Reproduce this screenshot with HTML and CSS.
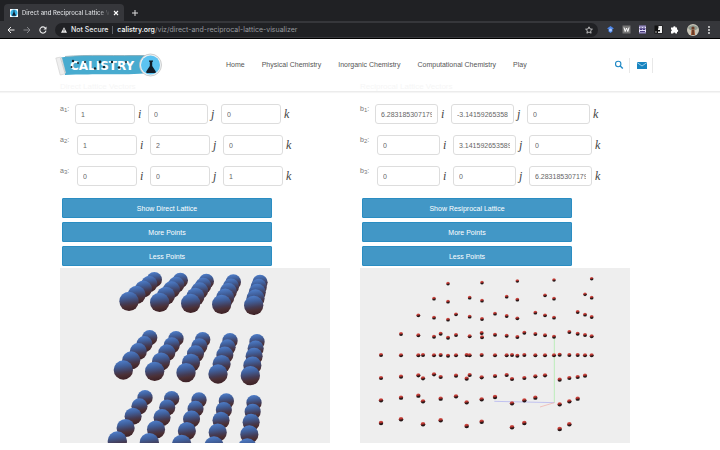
FILE: index.html
```html
<!DOCTYPE html>
<html lang="en">
<head>
<meta charset="utf-8">
<title>Direct and Reciprocal Lattice Visualizer</title>
<link rel="stylesheet" href="styles.css">
</head>
<body>
<div class="browser">
  <div class="tabs">
    <div class="tab">
      <svg class="favicon" viewBox="0 0 9 9"><path fill="#fff" d="M0 0h9v9H0z"/><circle cx="4.5" cy="4.5" r="4" fill="#38b4e6"/><path fill="#123" d="M4 1.5h1v2L6.800 7.500H2.200L4 3.500z"/></svg>
      <span class="tab-title">Direct and Reciprocal Lattice V</span>
      <button class="plain" aria-label="Close tab"><svg width="6" height="6" viewBox="0 0 6 6"><path d="M1 1l4 4M5 1L1 5" stroke="#fff" stroke-width="1.100"/></svg></button>
    </div>
    <button class="plain" aria-label="New tab"><svg width="8" height="8" viewBox="0 0 8 8"><path d="M4 1v6M1 4h6" stroke="#ddd" stroke-width="1"/></svg></button>
  </div>
  <div class="toolbar">
    <button class="plain" aria-label="Back"><svg width="8" height="8" viewBox="0 0 8 8"><path d="M7.500 4H1M4 1L1 4l3 3" fill="none" stroke="#eee"/></svg></button>
    <button class="plain" aria-label="Forward"><svg width="8" height="8" viewBox="0 0 8 8"><path d="M.5 4H7M4 1l3 3-3 3" fill="none" stroke="#85868a"/></svg></button>
    <button class="plain" aria-label="Reload"><svg width="8" height="8" viewBox="0 0 8 8"><path d="M6.500 2.200A3.100 3.100 0 1 0 7 4.700" fill="none" stroke="#eee" stroke-width="1.100"/><path d="M7.500.5v3h-3z" fill="#eee"/></svg></button>
    <div class="address">
      <svg width="6" height="6" viewBox="0 0 6 6"><path d="M3 .2L6 5.800H0z" fill="#eee"/><path d="M3 2v2M3 4.500v.7" stroke="#202124" stroke-width=".7"/></svg>
      <span class="insecure">Not Secure</span>
      <span class="url"><b>calistry.org</b>/viz/direct-and-reciprocal-lattice-visualizer</span>
      <button class="plain star" aria-label="Bookmark"><svg width="8" height="8" viewBox="0 0 8 8"><path d="M4 .8l1 2.200 2.400.2-1.800 1.600.5 2.400L4 6 1.900 7.200l.5-2.400L.6 3.200 3 3z" fill="none" stroke="#ddd" stroke-width=".8"/></svg></button>
    </div>
    <div class="extensions">
      <svg viewBox="0 0 9 9"><path d="M4.500 1L8 3.500 6.500 4v2.500l-2 1.500-2-1.500V4L1 3.500z" fill="#4d86e8"/><circle cx="4.500" cy="5" r="1.500" fill="#a8c7ff"/></svg>
      <svg viewBox="0 0 9 9"><path d="M.5.5h8v8h-8z" fill="#777"/><path d="M2 2.500l1.200 4L4.500 3l1.300 3.500L7 2.500" fill="none" stroke="#fff"/></svg>
      <svg viewBox="0 0 9 9"><path d="M1 .5h7v8H1z" fill="#e8e4fb"/><path d="M1 1h7M2 3h2v1.500H2zM5 3h2v1.500H5zM2 6.500h5M1 8h7" fill="none" stroke="#36276f" stroke-width=".9"/></svg>
      <svg viewBox="0 0 9 9"><path d="M.5.5h8v8h-8z" fill="#111"/><path d="M4.500 1H8v7H4V6.500h2V5H4V3.500h.5z" fill="#eee"/><path d="M1 7h2" stroke="#aaa"/></svg>
      <svg viewBox="0 0 9 9"><path d="M1 2.500h2.200a1.200 1.200 0 1 1 2.400 0H7v2a1.200 1.200 0 1 1 0 2.400v1.600H5.400a1.100 1.100 0 0 0-2.200 0H1V6.300a1.100 1.100 0 0 0 0-2.100z" fill="#fff"/></svg>
    </div>
    <svg class="avatar" viewBox="0 0 12 12"><circle cx="6" cy="6" r="6" fill="#c9c6b8"/><path d="M1 4a6 6 0 0 1 10 0L9 6H3z" fill="#8f9a90"/><circle cx="6" cy="4" r="1.600" fill="#6b3a25"/><path d="M4.500 5.500h3L8 11H4z" fill="#a0552f"/><path d="M5.500 6h1v5h-1z" fill="#3c2a22"/></svg>
    <button class="plain" aria-label="Menu"><svg width="4" height="10" viewBox="0 0 4 10"><g fill="#eee"><circle cx="2" cy="2" r=".9"/><circle cx="2" cy="5" r=".9"/><circle cx="2" cy="8" r=".9"/></g></svg></button>
  </div>
</div>

<header class="site-header">
  <a class="logo" href="#" aria-label="Calistry">
    <svg viewBox="0 0 108 24">
      <path d="M6 4.500C24 1 48 3 65 2.500s22-.5 30 .5v17c-20 2-46 1-62 1.500-9 0-16-.5-23 .5z" fill="#48abcf"/>
      <path d="M10 3.500C32 1.500 62 3 92 2.500" fill="none" stroke="#8babb5" stroke-width=".8"/>
      <path d="M.8 5l4.400-.8c1 0 1.500.5 1.800 1.500L10.500 19.500l-.8 1.500-4.500 1z" fill="#eee" stroke="#ccc" stroke-width=".6"/>
      <path d="M5.500 5l4.500 15" stroke="#c8c8c8" stroke-width=".8"/>
      <circle cx="95.500" cy="12" r="11" fill="#eef2f4" stroke="#bbb" stroke-width=".7"/>
      <circle cx="95.500" cy="12" r="9.500" fill="#5cc3f2"/>
      <path d="M94 7.500h4v1l-.8.500v4l3.600 5.500q.4 1.500-1 1.500h-7.600q-1.400 0-1-1.500l3.600-5.500V9l-.8-.5z" fill="#101c28"/>
      <text x="15" y="16.500" class="logo-text">CALISTRY</text>
      <g fill="#152329"><circle cx="18" cy="8" r="1.200"/><circle cx="16.500" cy="14" r="1"/><circle cx="23" cy="10" r="1"/><circle cx="30" cy="9" r="1"/><circle cx="40" cy="15.500" r="1.200"/><circle cx="45" cy="9" r="1.400"/><circle cx="49" cy="14" r="1.200"/><circle cx="57" cy="9" r="1.200"/><circle cx="64" cy="14.500" r="1.300"/><circle cx="71" cy="9" r="1"/></g>
    </svg>
  </a>
  <nav class="nav">
    <a href="#">Home</a><a href="#">Physical Chemistry</a><a href="#">Inorganic Chemistry</a><a href="#">Computational Chemistry</a><a href="#">Play</a>
  </nav>
  <div class="actions">
    <a href="#" aria-label="Search"><svg width="10" height="10" viewBox="0 0 10 10"><circle cx="4.200" cy="4" r="2.700" fill="none" stroke="#2189c5" stroke-width="1.100"/><path d="M6.200 6l2.600 2.600" stroke="#2189c5" stroke-width="1.400"/></svg></a>
    <a href="#" aria-label="Mail"><svg width="10" height="8" viewBox="0 0 10 8"><path d="M0 1h10v7H0z" fill="#1784c0"/><path d="M0 1.500l5 3.500 5-3.500" fill="none" stroke="#b9def2" stroke-width=".8"/></svg></a>
  </div>
</header>

<main class="content">
  <section class="lattice direct">
    <h2>Direct Lattice Vectors</h2>
    <form class="vectors">
      <div class="row"><label for="a1i">a<sub>1</sub>:</label><input id="a1i" value="1"><i>i</i><input aria-label="a1 j" value="0"><i>j</i><input aria-label="a1 k" value="0"><i>k</i></div>
      <div class="row next"><label for="a2i">a<sub>2</sub>:</label><input id="a2i" value="1"><i>i</i><input aria-label="a2 j" value="2"><i>j</i><input aria-label="a2 k" value="0"><i>k</i></div>
      <div class="row next"><label for="a3i">a<sub>3</sub>:</label><input id="a3i" value="0"><i>i</i><input aria-label="a3 j" value="0"><i>j</i><input aria-label="a3 k" value="1"><i>k</i></div>
    </form>
    <div class="buttons">
      <button>Show Direct Lattice</button>
      <button>More Points</button>
      <button>Less Points</button>
    </div>
    <svg class="scene" id="direct" viewBox="15 11 810 525" role="img" aria-label="Direct lattice">
      <defs><linearGradient id="sphere" x1=".4" y1="0" x2=".55" y2="1"><stop offset="0" stop-color="#4f7fcb"/><stop offset=".3" stop-color="#405f9b"/><stop offset=".6" stop-color="#443b54"/><stop offset=".75" stop-color="#4b3036"/><stop offset="1" stop-color="#3c2024"/></linearGradient></defs>
    </svg>
  </section>
  <section class="lattice reciprocal">
    <h2>Reciprocal Lattice Vectors</h2>
    <form class="vectors">
      <div class="row"><label for="b1i">b<sub>1</sub>:</label><input id="b1i" value="6.283185307179586"><i>i</i><input aria-label="b1 j" value="-3.141592653589793"><i>j</i><input aria-label="b1 k" value="0"><i>k</i></div>
      <div class="row next"><label for="b2i">b<sub>2</sub>:</label><input id="b2i" value="0"><i>i</i><input aria-label="b2 j" value="3.141592653589793"><i>j</i><input aria-label="b2 k" value="0"><i>k</i></div>
      <div class="row next"><label for="b3i">b<sub>3</sub>:</label><input id="b3i" value="0"><i>i</i><input aria-label="b3 j" value="0"><i>j</i><input aria-label="b3 k" value="6.283185307179586"><i>k</i></div>
    </form>
    <div class="buttons">
      <button>Show Resiprocal Lattice</button>
      <button>More Points</button>
      <button>Less Points</button>
    </div>
    <svg class="scene" id="reciprocal" viewBox="15 11 810 525" role="img" aria-label="Reciprocal lattice">
      <defs><linearGradient id="point" x1=".4" y1="0" x2=".6" y2="1"><stop offset="0" stop-color="#d85a50"/><stop offset=".4" stop-color="#b2302c"/><stop offset=".65" stop-color="#32191a"/><stop offset="1" stop-color="#141010"/></linearGradient></defs>
      <path d="M598 415V215" stroke="#a5eda0" stroke-width="2"/><path d="M598 415L418 411" stroke="#a9abf0" stroke-width="2"/><path d="M598 415L555 428" stroke="#f0aaa5" stroke-width="2"/>
    </svg>
  </section>
</main>
<script src="lattice.js"></script>
</body>
</html>
```
FILE: styles.css
```css
* { box-sizing: border-box; }
body { margin: 0; background: #fff; color: #555; font: 7px/10px "Liberation Sans", Arial, sans-serif; }
svg { display: block; }
a { color: inherit; text-decoration: none; }
.plain { border: 0; padding: 0; background: none; }

.browser { background: #202124; border-bottom: 1px solid #000; font-family: Roboto, sans-serif; color: #e8eaed; }
.tabs { display: flex; align-items: center; gap: 7px; height: 21px; padding: 4px 4px 0; }
.tab { display: flex; align-items: center; gap: 4px; width: 120px; height: 17px; padding: 0 5px 0 6px; background: #36373b; border-radius: 4px 4px 0 0; }
.favicon { width: 8px; height: 8px; flex: none; }
.tab-title { flex: 1; min-width: 0; white-space: nowrap; font-size: 6px; font-weight: 500; font-family: Inter, sans-serif; }
.tab-title { background: linear-gradient(90deg, #e8eaed 88%, #55565a 98%); background-clip: text; color: transparent; }
.toolbar { display: flex; align-items: center; gap: 8px; height: 17px; padding: 0 9px 0 7px; background: #36373b; }
.address { display: flex; align-items: center; flex: 1; gap: 4px; height: 14px; padding: 0 5px 0 6px; border-radius: 7px; background: #202124; font-family: Inter, sans-serif; }
.insecure { padding-right: 4px; border-right: 1px solid #5f6368; line-height: 8px; font-weight: 500; }
.url { color: #96999e; white-space: nowrap; }
.url b { color: #fff; font-weight: 500; }
.star { margin-left: auto; }
.extensions { display: flex; gap: 7px; }
.extensions svg { width: 9px; height: 9px; }
.avatar { width: 12px; height: 12px; }

.site-header { display: flex; align-items: center; height: 53px; padding: 0 67px 0 55px; border-bottom: 1px solid #ececec; box-shadow: 0 1px 1px #f5f5f5; }
.logo { width: 108px; }
.logo-text { font: bold 12px "DejaVu Sans", sans-serif; fill: #fff; }
.nav { display: flex; flex: 1; gap: 17px; margin-left: 63px; }
.actions { display: flex; align-items: center; }
.actions a { display: flex; align-items: center; height: 15px; padding: 0 5px; border-right: 1px solid #e8e8e8; }
.actions a + a { padding: 0 5px 0 7px; }

.content { display: grid; grid-template-columns: 1fr 1fr; gap: 30px; padding: 0 90px 0 60px; }
.lattice h2 { margin: -10px 0 12px; font: 8px/10px "Liberation Sans", Arial, sans-serif; color: #f6f6f6; }
.vectors { display: grid; gap: 11px; }
.row { display: flex; align-items: center; height: 20px; white-space: nowrap; }
.row label { width: 15px; align-self: flex-start; font-size: 7px; color: #777; }
.row.next label { width: 17px; }
.row sub { font-size: 6px; line-height: 0; vertical-align: -1px; }
.row input { width: 60px; height: 20px; padding: 0 5px; border: 1px solid #ddd; border-radius: 3px; background: #fff; color: #666; font: 7px "Liberation Sans", Arial, sans-serif; }
.reciprocal .row input { width: 63px; }
.row i { width: 13px; padding-left: 3px; font: italic 12px "Liberation Serif", serif; color: #444; }
.buttons { display: grid; gap: 4px; margin: 12px 58px 2px 2px; }
.buttons button { height: 20px; padding: 0; border: 1px solid #2a8dc2; border-radius: 1px; background: #4297c6; color: #fff; font: 7px "Liberation Sans", Arial, sans-serif; }
.scene { width: 100%; background: #eee; }
```
FILE: lattice.js
```js
// Each column is [front x, front y, back x, back y]; depths place its five spheres.
const columns = [
  [222,111,298,46],[314,114,376,48],[407,117,454,51],[500,120,535,53],[596,123,615,54],
  [205,317,284,220],[299,321,363,223],[393,325,443,226],[489,329,525,229],[586,334,606,232],
  [187,530,270,400],[283,535,350,403],[380,540,432,407],[477,545,514,410],[577,551,597,415]
];
const depths = [1, .8, .57, .3, 0];
const points = "279,58 381,55 237,103 279,112 344,100 381,109 190,153 237,160 279,166 303,150 344,157 381,164 138,209 190,213 237,217 257,208 279,220 303,212 344,216 380,206 381,219 78,272 138,273 190,273 204,272 237,273 257,272 279,274 303,273 335,272 344,273 380,272 78,341 138,337 190,333 204,342 237,330 257,338 303,334 335,343 344,332 380,339 78,408 138,400 190,394 204,411 257,403 303,396 335,414 380,405 78,476 138,465 204,480 257,468 335,485 380,472 487,50 597,47 710,43 455,97 487,106 570,93 597,103 690,90 710,100 420,148 455,155 487,162 541,145 570,153 597,160 668,143 690,151 710,158 420,211 455,214 487,218 508,205 541,209 570,213 597,217 643,203 668,208 690,212 710,216 420,273 455,273 471,272 487,274 508,272 541,273 570,273 597,273 614,271 643,272 668,272 690,273 710,273 420,335 455,332 471,344 508,341 541,336 570,333 614,346 643,341 668,338 690,334 420,398 471,417 508,408 541,400 614,420 643,411 668,403 471,489 508,476 614,494 643,480";

function ball(scene, x, y, r, fill) {
  const circle = document.createElementNS("http://www.w3.org/2000/svg", "circle");
  circle.setAttribute("cx", x);
  circle.setAttribute("cy", y);
  circle.setAttribute("r", r);
  circle.setAttribute("fill", fill);
  scene.append(circle);
}

const direct = document.getElementById("direct");
for (const [fx, fy, bx, by] of columns) {
  for (const d of depths) {
    ball(direct, fx + (bx - fx) * d, fy + (by - fy) * d, 29 - 6 * d, "url(#sphere)");
  }
}

const reciprocal = document.getElementById("reciprocal");
for (const point of points.split(" ")) {
  const [x, y] = point.split(",").map(Number);
  ball(reciprocal, x, y, 5.2 + y / 300, "url(#point)");
}
```
